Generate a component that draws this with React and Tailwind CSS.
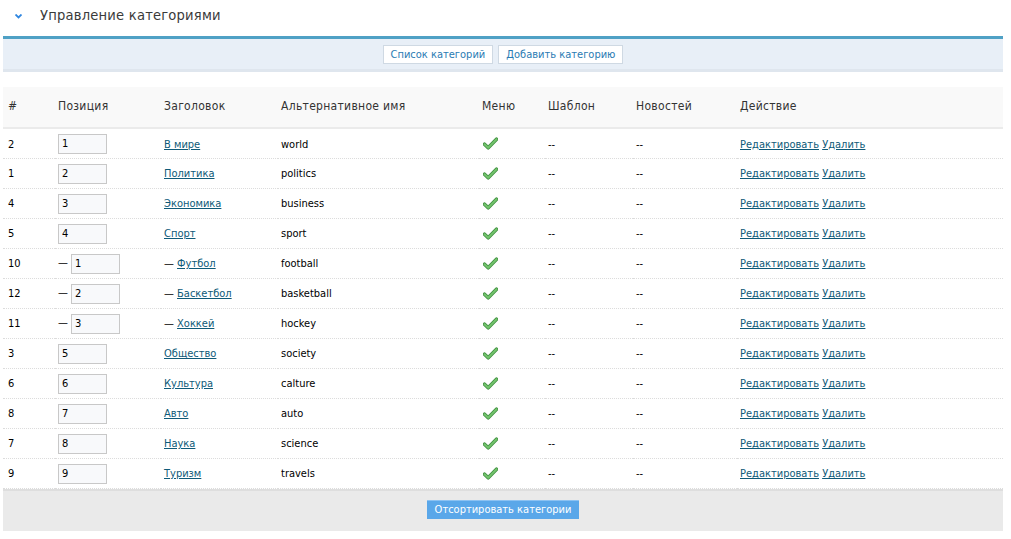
import React from 'react';

const rows = [
    { id: 2, pos: '1', title: 'В мире', alias: 'world' },
    { id: 1, pos: '2', title: 'Политика', alias: 'politics' },
    { id: 4, pos: '3', title: 'Экономика', alias: 'business' },
    { id: 5, pos: '4', title: 'Спорт', alias: 'sport' },
    { id: 10, pos: '1', title: 'Футбол', alias: 'football', sub: true },
    { id: 12, pos: '2', title: 'Баскетбол', alias: 'basketball', sub: true },
    { id: 11, pos: '3', title: 'Хоккей', alias: 'hockey', sub: true },
    { id: 3, pos: '5', title: 'Общество', alias: 'society' },
    { id: 6, pos: '6', title: 'Культура', alias: 'calture' },
    { id: 8, pos: '7', title: 'Авто', alias: 'auto' },
    { id: 7, pos: '8', title: 'Наука', alias: 'science' },
    { id: 9, pos: '9', title: 'Туризм', alias: 'travels' },
];

function Check() {
    return (
        <svg width="15" height="13" viewBox="0 0 15 13" className="block">
            <path d="M1.5 7.2 L5.2 10.8 L13.5 2.2" fill="none" stroke="#3f8f3f" strokeWidth="3.6" strokeLinecap="round" strokeLinejoin="round" />
            <path d="M1.5 7.2 L5.2 10.8 L13.5 2.2" fill="none" stroke="#72c26c" strokeWidth="2" strokeLinecap="round" strokeLinejoin="round" />
        </svg>
    );
}

const font = "font-['DejaVu_Sans_Condensed','DejaVu_Sans',sans-serif]";

export default function App() {
    return (
        <div className={`bg-white w-[1011px] h-[539px] text-[11px] text-black ${font}`}>
            <div className="h-[36px] flex items-center">
                <svg width="7" height="5" viewBox="0 0 7 5" className="ml-[15px] mt-[-4px]">
                    <path d="M0.5 0.5 L3.5 3.5 L6.5 0.5" fill="none" stroke="#2f86e0" strokeWidth="1.8" />
                </svg>
                <span className="ml-[18px] mt-[-6px] text-[14.6px] text-[#3a3a3a] tracking-[0.2px]">Управление категориями</span>
            </div>
            <div className="ml-[3px] w-[1000px]">
                <div className="h-[3px] bg-[#4fa1c5]" />
                <div className="h-[30px] bg-[#e8eff7] flex items-center justify-center gap-[5px]">
                    <button className="h-[19px] px-[7px] bg-white border border-[#cfd9e3] text-[#2a7bb3] text-[11px] leading-none">Список категорий</button>
                    <button className="h-[19px] px-[7px] bg-white border border-[#cfd9e3] text-[#2a7bb3] text-[11px] leading-none">Добавить категорию</button>
                </div>
                <div className="h-[3px] bg-[#dfe6ee]" />
                <div className="h-[15px]" />
                <table className="w-[1000px] table-fixed border-collapse">
                    <colgroup>
                        <col className="w-[52px]" />
                        <col className="w-[106px]" />
                        <col className="w-[117px]" />
                        <col className="w-[201px]" />
                        <col className="w-[66px]" />
                        <col className="w-[88px]" />
                        <col className="w-[104px]" />
                        <col className="w-[266px]" />
                    </colgroup>
                    <thead>
                        <tr className="h-[41px] bg-[#f9f9f9] border-b-2 border-[#ebebeb] text-[12px] text-[#333] tracking-[0.3px]">
                            <th className="text-left font-normal pl-[5px] pb-[3px]">#</th>
                            <th className="text-left font-normal pl-[3px] pb-[3px]">Позиция</th>
                            <th className="text-left font-normal pl-[3px] pb-[3px]">Заголовок</th>
                            <th className="text-left font-normal pl-[3px] pb-[3px]">Альтернативное имя</th>
                            <th className="text-left font-normal pl-[3px] pb-[3px]">Меню</th>
                            <th className="text-left font-normal pl-[3px] pb-[3px]">Шаблон</th>
                            <th className="text-left font-normal pl-[3px] pb-[3px]">Новостей</th>
                            <th className="text-left font-normal pl-[3px] pb-[3px]">Действие</th>
                        </tr>
                    </thead>
                    <tbody>
                        {rows.map((r, i) => (
                            <tr key={i} className="h-[30px] border-b border-dotted border-[#dcdcdc]">
                                <td className="pl-[5px] pt-[3px]">{r.id}</td>
                                <td className="pl-[3px] pt-[1px]">
                                    <div className="flex items-center gap-[3px]">
                                        {r.sub && <span>—</span>}
                                        <input
                                            readOnly
                                            value={r.pos}
                                            className="w-[49px] h-[20px] border border-[#c8c8c8] bg-[#f8f9fb] px-[3px] text-[11px] outline-none"
                                        />
                                    </div>
                                </td>
                                <td className="pl-[3px] pt-[3px] whitespace-nowrap">
                                    {r.sub && <span>— </span>}
                                    <a href="#" className="text-[#0e5a78] underline">{r.title}</a>
                                </td>
                                <td className="pl-[3px] pt-[3px]">{r.alias}</td>
                                <td className="pl-[4px] pt-[1px]"><Check /></td>
                                <td className="pl-[3px] pt-[3px]">--</td>
                                <td className="pl-[3px] pt-[3px]">--</td>
                                <td className="pl-[3px] pt-[3px] whitespace-nowrap">
                                    <a href="#" className="text-[#0e5a78] underline">Редактировать</a>{' '}
                                    <a href="#" className="text-[#0e5a78] underline">Удалить</a>
                                </td>
                            </tr>
                        ))}
                    </tbody>
                </table>
                <div className="h-[2px] bg-[#dedede]" />
                <div className="h-[40px] bg-[#eaeaea] flex items-center justify-center pb-[3px]">
                    <button className="h-[19px] w-[152px] bg-[#5aa7e9] border-t border-[#8cc2f2] text-white text-[11px] leading-none">Отсортировать категории</button>
                </div>
            </div>
        </div>
    );
}
